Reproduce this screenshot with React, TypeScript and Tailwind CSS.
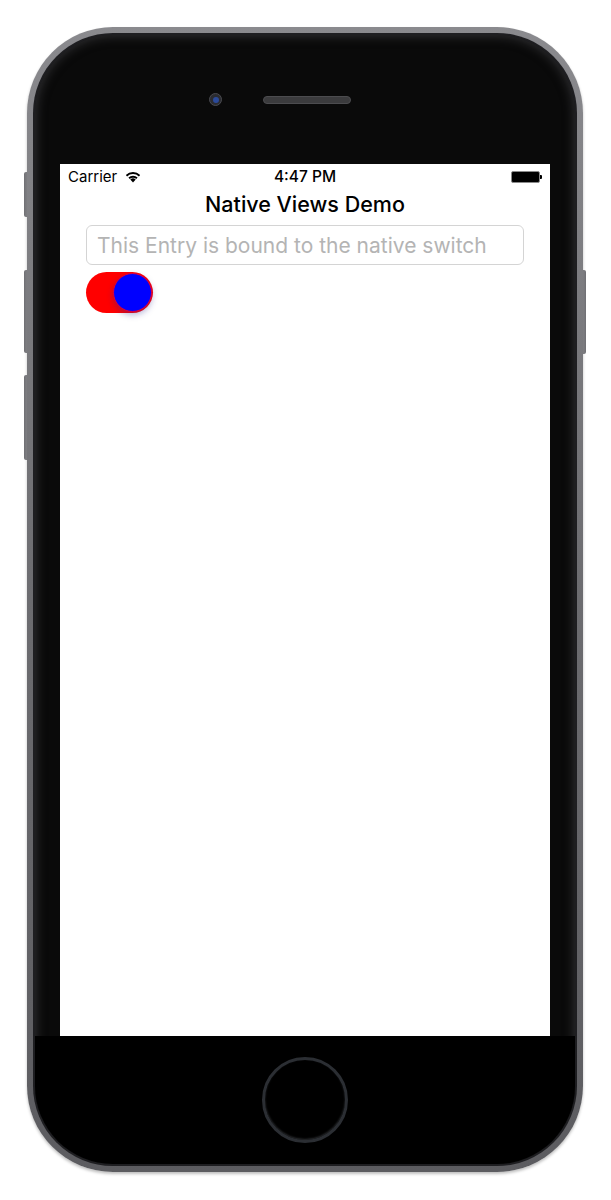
import { useState } from "react";

function Wifi() {
  return (
    <svg width="16" height="11" viewBox="0 0 16 11" className="ml-[8px] mt-[1px]">
      <path d="M8 10.5 L5.3 7.6 A4 4 0 0 1 10.7 7.6 Z" fill="#000" />
      <path d="M3.4 5.6 A6.6 6.6 0 0 1 12.6 5.6 L11.3 7 A4.7 4.7 0 0 0 4.7 7 Z" fill="#000" />
      <path d="M0.8 3 A10.2 10.2 0 0 1 15.2 3 L13.9 4.4 A8.3 8.3 0 0 0 2.1 4.4 Z" fill="#000" />
    </svg>
  );
}

function Battery() {
  return (
    <div className="flex items-center">
      <div className="w-[29px] h-[12px] rounded-[2px] border border-[#8a8a8a] bg-black" />
      <div className="w-[2px] h-[4px] bg-black rounded-r-[1px]" />
    </div>
  );
}

export default function App() {
  const [on, setOn] = useState(true);

  return (
    <div className="w-[611px] h-[1200px] bg-white pt-[27px] pl-[27px] font-['Inter',sans-serif]">
      <div className="relative w-[556px] h-[1145px]">
        {/* side buttons */}
        <div className="absolute -left-[3px] top-[145px] w-[5px] h-[45px] rounded-l-[2px] bg-gradient-to-r from-[#6e6e72] to-[#a2a2a7]" />
        <div className="absolute -left-[3px] top-[243px] w-[5px] h-[83px] rounded-l-[2px] bg-gradient-to-r from-[#6e6e72] to-[#a2a2a7]" />
        <div className="absolute -left-[3px] top-[348px] w-[5px] h-[85px] rounded-l-[2px] bg-gradient-to-r from-[#6e6e72] to-[#a2a2a7]" />
        <div className="absolute -right-[3px] top-[243px] w-[5px] h-[84px] rounded-r-[2px] bg-gradient-to-l from-[#6e6e72] to-[#a2a2a7]" />

        {/* body */}
        <div className="relative w-full h-full rounded-[86px] bg-gradient-to-b from-[#8a8a8e] via-[#6c6c70] to-[#5c5c60] p-[6px] shadow-[0_2px_3px_rgba(0,0,0,0.25)]">
          <div className="w-full h-full rounded-[80px] bg-[#1e1e21] p-[2px]">
            <div className="w-full h-full rounded-[78px] bg-[#0a0a0a] flex flex-col overflow-hidden shadow-[inset_0_0_12px_rgba(100,100,105,0.5)]">
              {/* top bezel */}
              <div className="h-[129px] flex items-center pl-[174px]">
                <div className="w-[13px] h-[13px] rounded-full bg-[#2a2b30] border border-[#4a4b50] flex items-center justify-center">
                  <div className="w-[6px] h-[6px] rounded-full bg-[#2b4a9a]" />
                </div>
                <div className="ml-[41px] w-[88px] h-[8px] rounded-full bg-[#3b3b3d] border border-[#4c4c4f]" />
              </div>

              {/* screen */}
              <div className="mx-[25px] w-[490px] h-[872px] bg-white flex flex-col">
                <div className="h-[26px] px-[8px] flex items-center justify-between text-[15px] text-black">
                  <div className="flex items-center w-[90px]">
                    <span>Carrier</span>
                    <Wifi />
                  </div>
                  <span className="font-medium text-[15.5px]">4:47 PM</span>
                  <div className="w-[90px] flex justify-end">
                    <Battery />
                  </div>
                </div>
                <div className="text-center text-[21.5px] font-medium leading-[28px] text-black">
                  Native Views Demo
                </div>
                <div className="px-[26px] mt-[7px]">
                  <input
                    className="w-full h-[40px] rounded-[6px] border border-[#d4d4d4] px-[10px] text-[21px] text-black placeholder-[#b4b4b4] outline-none"
                    placeholder="This Entry is bound to the native switch"
                  />
                </div>
                <div className="px-[26px] mt-[7px]">
                  <button
                    onClick={() => setOn(!on)}
                    className="relative w-[67px] h-[41px] rounded-full bg-[#ff0000] flex items-center"
                  >
                    <span
                      className={
                        on
                          ? "ml-[27px] w-[39px] h-[39px] rounded-full bg-[#0000ff] border border-[#e0003a] shadow-[0_3px_6px_rgba(40,40,140,0.35)]"
                          : "ml-[1px] w-[39px] h-[39px] rounded-full bg-[#0000ff] border border-[#e0003a] shadow-[0_3px_6px_rgba(40,40,140,0.35)]"
                      }
                    />
                  </button>
                </div>
              </div>

              {/* bottom bezel */}
              <div className="flex-1 bg-black flex items-center justify-center">
                <div className="w-[86px] h-[86px] rounded-full border-[3px] border-[#2b2e33] shadow-[inset_0_-1px_2px_rgba(120,125,135,0.35)]" />
              </div>
            </div>
          </div>
        </div>
      </div>
    </div>
  );
}
